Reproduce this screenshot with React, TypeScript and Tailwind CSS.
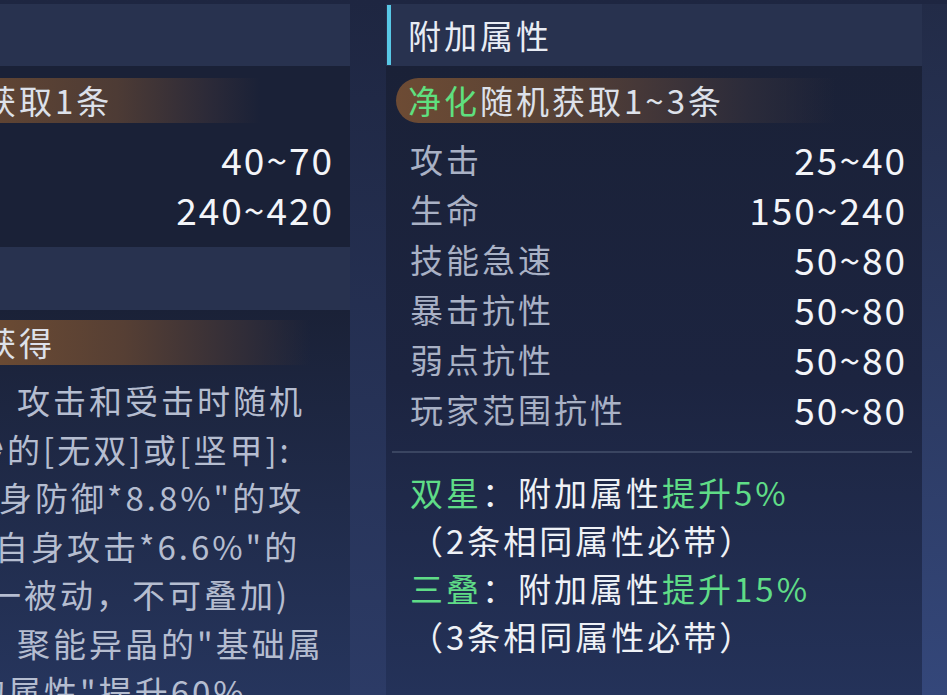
import React from "react";

const rows = [
  ["攻击", "25~40"],
  ["生命", "150~240"],
  ["技能急速", "50~80"],
  ["暴击抗性", "50~80"],
  ["弱点抗性", "50~80"],
  ["玩家范围抗性", "50~80"],
];

export default function App() {
  return (
    <div className="w-[947px] h-[695px] overflow-hidden flex pt-[4px] bg-linear-to-b from-[#1e2641] to-[#2c3b66] font-['Noto_Sans_CJK_SC',sans-serif]">
      {/* left column */}
      <div className="w-[350px] shrink-0 flex flex-col overflow-hidden">
        <div className="h-[62px] shrink-0 bg-[#28324f]" />
        <div className="h-[181px] shrink-0 bg-[#1a2137] flex flex-col">
          <div className="mt-[12px] h-[45px] w-[260px] shrink-0 bg-[linear-gradient(90deg,#5f4433_0%,#4d3b35_45%,#2c2a38_80%,transparent_100%)] flex items-center overflow-hidden">
            <span className="-ml-[17px] text-[33px] tracking-[3px] text-[#dde1ea] whitespace-nowrap leading-none">获取1条</span>
          </div>
          <div className="mt-[11px] flex flex-col pr-[16px]">
            <div className="h-[50px] flex items-center justify-end text-[37px] tracking-[2px] text-[#f3f5f9] leading-none">40~70</div>
            <div className="h-[50px] flex items-center justify-end text-[37px] tracking-[2px] text-[#f3f5f9] leading-none">240~420</div>
          </div>
        </div>
        <div className="h-[63px] shrink-0 bg-[#28324f]" />
        <div className="flex-1 min-h-0 bg-linear-to-b from-[#1a2137] to-[#26355d] flex flex-col">
          <div className="mt-[10px] h-[45px] w-[310px] shrink-0 bg-[linear-gradient(90deg,#6a4a33_0%,#563f34_40%,#2f2c38_80%,transparent_100%)] flex items-center overflow-hidden">
            <span className="-ml-[17px] text-[33px] tracking-[3px] text-[#dde1ea] whitespace-nowrap leading-none">获得</span>
          </div>
          <div className="mt-[11px] flex flex-col text-[33px] tracking-[3px] text-[#b5bdd0] whitespace-nowrap">
            <div className="h-[48.5px] shrink-0 leading-[48.5px] ml-[17px]">攻击和受击时随机</div>
            <div className="h-[48.5px] shrink-0 leading-[48.5px] -ml-[29px]">秒的[无双]或[坚甲]:</div>
            <div className="h-[48.5px] shrink-0 leading-[48.5px] -ml-[1px]">身防御*8.8%"的攻</div>
            <div className="h-[48.5px] shrink-0 leading-[48.5px] -ml-[5px]">自身攻击*6.6%"的</div>
            <div className="h-[48.5px] shrink-0 leading-[48.5px] -ml-[12px]">一被动，不可叠加)</div>
            <div className="h-[48.5px] shrink-0 leading-[48.5px] ml-[17px]">聚能异晶的"基础属</div>
            <div className="h-[48.5px] shrink-0 leading-[48.5px] -ml-[28px]">的属性"提升60%</div>
          </div>
        </div>
      </div>

      {/* gap */}
      <div className="w-[36px] shrink-0" />

      {/* right panel */}
      <div className="w-[536px] shrink-0 flex flex-col">
        <div className="h-[62px] shrink-0 bg-[#28324f] flex items-center">
          <div className="w-[4px] h-[60px] bg-[#58c8e6] ml-[1px]" />
          <span className="ml-[17px] text-[33px] tracking-[3px] text-[#e8ecf4] leading-none">附加属性</span>
        </div>
        <div className="flex-1 min-h-0 bg-linear-to-b from-[#1a2137] via-[#1c2440] to-[#243259] flex flex-col">
          <div className="mt-[12px] ml-[10px] h-[45px] w-[440px] shrink-0 rounded-l-full bg-[linear-gradient(90deg,#6d4b34_0%,#5c4435_30%,#463838_55%,#2b2b3a_80%,transparent_100%)] flex items-center pl-[12px]">
            <span className="text-[33px] tracking-[3px] leading-none text-[#5fe07f]">净化</span>
            <span className="text-[33px] tracking-[3px] leading-none text-[#dde1ea]">随机获取1~3条</span>
          </div>
          <div className="mt-[11px] flex flex-col pl-[24px] pr-[15px]">
            {rows.map(([k, v]) => (
              <div key={k} className="h-[50px] shrink-0 flex items-center justify-between">
                <span className="text-[33px] tracking-[3px] text-[#a9b1c5] leading-none">{k}</span>
                <span className="text-[37px] tracking-[2px] text-[#f3f5f9] leading-none">{v}</span>
              </div>
            ))}
          </div>
          <div className="mt-[17px] ml-[6px] mr-[10px] h-[2px] shrink-0 bg-[#3a4561]" />
          <div className="mt-[15px] pl-[24px] flex flex-col text-[33px] tracking-[3px] text-[#eef1f6] whitespace-nowrap">
            <div className="h-[48px] leading-[48px]">
              <span className="text-[#5fdc87]">双星</span>：附加属性<span className="text-[#5fdc87]">提升5%</span>
            </div>
            <div className="h-[48px] leading-[48px]">（2条相同属性必带）</div>
            <div className="h-[48px] leading-[48px]">
              <span className="text-[#5fdc87]">三叠</span>：附加属性<span className="text-[#5fdc87]">提升15%</span>
            </div>
            <div className="h-[48px] leading-[48px]">（3条相同属性必带）</div>
          </div>
        </div>
      </div>

      {/* right strip */}
      <div className="flex-1 bg-linear-to-b from-[#222b47] to-[#34477a]" />
    </div>
  );
}
